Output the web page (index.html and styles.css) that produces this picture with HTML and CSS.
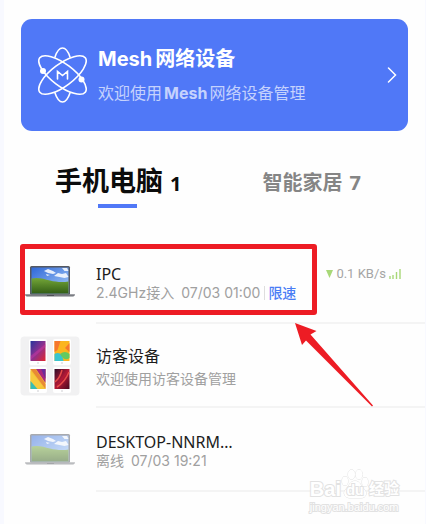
FILE: index.html
```html
<!DOCTYPE html>
<html lang="zh-CN">
<head>
<meta charset="utf-8">
<meta name="viewport" content="width=device-width, initial-scale=1">
<title>手机电脑</title>
<link rel="stylesheet" href="styles.css">
</head>
<body>
<svg class="defs" aria-hidden="true">
  <defs>
    <linearGradient id="sky" x1="0" y1="0" x2="1" y2="1"><stop offset="0" stop-color="#2f68d8"/><stop offset="1" stop-color="#a9cdf8"/></linearGradient>
    <linearGradient id="grass" x1="0" y1="0" x2="0" y2="1"><stop offset="0" stop-color="#74a638"/><stop offset="1" stop-color="#335e16"/></linearGradient>
    <linearGradient id="t1" x1="0" y1="0" x2="1" y2="1"><stop offset="0" stop-color="#27349c"/><stop offset=".5" stop-color="#8b3190"/><stop offset="1" stop-color="#e3262c"/></linearGradient>
    <linearGradient id="t4" x1="0" y1="0" x2="1" y2="1"><stop offset="0" stop-color="#2b0d28"/><stop offset=".5" stop-color="#b31836"/><stop offset="1" stop-color="#46081d"/></linearGradient>
    <symbol id="laptop" viewBox="0 0 50 32">
      <rect x="5" y="0" width="40" height="29" rx="1.5" fill="#555961"/>
      <rect x="6.500" y="1.500" width="37" height="26" fill="url(#sky)"/>
      <path d="M19 5l4-2 5 2 3 2-3 1-5-1zM29 10l4-3 4 1 4-1 2.500 4-4 1-5-1zM37 2l5 0 1.500 3-4 0zM21 8l4 1-3 1z" fill="#fff" opacity=".85"/>
      <path d="M6.500 12.500C13 11 19 13 25 14.500S37 16.500 43.500 15.500V27.500H6.500z" fill="url(#grass)"/>
      <path d="M0 28.500H50L48.500 30.500H1.500z" fill="#6d7076"/>
      <path d="M0 28.500H50V29.500H0z" fill="#85888e"/>
      <path d="M22 29h7v1h-7z" fill="#4d5056"/>
    </symbol>
  </defs>
</svg>
<main class="page">
  <a class="mesh" href="#mesh">
    <svg class="atom" viewBox="0 0 50 58" aria-hidden="true">
      <g fill="none" stroke="#fff" stroke-width="1.600" stroke-linecap="round">
        <path d="M18 11C20 5 23 2 25.500 2S31 5 33 11M18 47C20 53 23 56 25.500 56S31 53 33 47"/>
        <ellipse cx="25.500" cy="29" rx="28.500" ry="11" transform="rotate(37 25.500 29)"/>
        <ellipse cx="25.500" cy="29" rx="28.500" ry="11" transform="rotate(-37 25.500 29)"/>
        <path d="M20.500 33V25.500L25.500 29.500 30.500 25.500V33"/>
      </g>
      <circle cx="6" cy="25" r="3" fill="#fff"/><circle cx="44.500" cy="33.500" r="3" fill="#fff"/>
    </svg>
    <div class="mesh-text">
      <h1 class="mesh-title"><span class="latin">Mesh</span>网络设备</h1>
      <p class="mesh-sub">欢迎使用<span class="latin">Mesh</span>网络设备管理</p>
    </div>
    <svg class="chevron" viewBox="0 0 10 16" aria-hidden="true"><path d="M1.500 1L8.500 8 1.500 15" fill="none" stroke="#fff" stroke-width="1.500" stroke-linecap="round"/></svg>
  </a>

  <nav class="tabs">
    <button class="tab tab-active" type="button">手机电脑<span class="count">1</span></button>
    <button class="tab" type="button">智能家居<span class="count">7</span></button>
  </nav>

  <ul class="devices">
    <li class="device device-marked">
      <svg class="thumb" viewBox="-5 -14 60 60" aria-hidden="true"><use href="#laptop" width="50" height="32"/></svg>
      <div class="info">
        <div class="copy">
          <h2 class="name">IPC</h2>
          <p class="meta"><span>2.4GHz接入</span><time>07/03 01:00</time><a class="limit" href="#limit">限速</a></p>
        </div>
        <div class="speed">
          <svg class="down" viewBox="0 0 7 8" aria-hidden="true"><path d="M0 0h7L3.500 8z" fill="#a8d878"/></svg>
          <span>0.1 KB/s</span>
          <svg class="bars" viewBox="0 0 12 10" aria-hidden="true"><path d="M1 7v3M4 6v4M7.500 3v7M11 0v10" stroke="#a8d878" stroke-width="1.400"/></svg>
        </div>
      </div>
      <svg class="arrow" viewBox="0 0 79 84" aria-hidden="true"><path d="M0 0L21.500 8 15.500 11.500 78 82.500 77 83.500 11 17.500 7 22z" fill="#ed1c24"/></svg>
    </li>
    <li class="device device-guest">
      <svg class="thumb" viewBox="0 0 60 60" aria-hidden="true">
        <rect x=".500" y=".500" width="59" height="59" rx="4" fill="#f1f1f2"/>
        <g fill="#fff"><rect x="9" y="3" width="18" height="26" rx="2"/><rect x="33" y="3" width="18" height="26" rx="2"/><rect x="9" y="31" width="18" height="26" rx="2"/><rect x="33" y="31" width="18" height="26" rx="2"/></g>
        <path d="M10.500 5h15v20h-15z" fill="url(#t1)"/>
        <path d="M10.500 20L25.500 8v3L10.500 24z" fill="#d33aa6" opacity=".45"/>
        <path d="M34.500 5h15v20h-15z" fill="#fbb51e"/>
        <path d="M34.500 5h6l-3 9-3 2zM45 12l4.500-5v9z" fill="#f6772d"/>
        <path d="M34.500 18q7-4 9 7h-9z" fill="#39c5ce"/><path d="M40 18q5-4 9.500 0v4q-5 4-9.500-4z" fill="#64ca61"/>
        <path d="M10.500 33h15v20h-15z" fill="#f4c537"/>
        <path d="M10.500 33h5l10 15v5z" fill="#e98a35"/><path d="M16 33h9.500v14z" fill="#a9277e"/><path d="M21 33h4.500v10z" fill="#6b2a9a"/><path d="M10.500 35v18h6l6-3z" fill="#f7cb3f"/><path d="M10.500 45v8h7z" fill="#36bdb7"/>
        <path d="M34.500 33h15v20h-15z" fill="url(#t4)"/>
        <path d="M35 46Q40 42 42 34M37 51Q45 46 49 36" fill="none" stroke="#e84b48" stroke-width="1.500"/>
        <g fill="#c9c9ce"><circle cx="18" cy="27" r=".8"/><circle cx="42" cy="27" r=".8"/><circle cx="18" cy="55" r=".8"/><circle cx="42" cy="55" r=".8"/></g>
      </svg>
      <div class="info">
        <div class="copy">
          <h2 class="name">访客设备</h2>
          <p class="meta">欢迎使用访客设备管理</p>
        </div>
      </div>
    </li>
    <li class="device">
      <svg class="thumb thumb-offline" viewBox="-5 -14 60 60" aria-hidden="true"><use href="#laptop" width="50" height="32"/></svg>
      <div class="info">
        <div class="copy">
          <h2 class="name">DESKTOP-NNRM…</h2>
          <p class="meta"><span>离线</span><time>07/03 19:21</time></p>
        </div>
      </div>
    </li>
  </ul>

  <div class="watermark">
    <div class="brand"><span>Bai</span>
      <svg class="paw" viewBox="0 0 28 30" aria-hidden="true">
        <g fill="#fff" stroke="#e2e2e2"><ellipse cx="10.500" cy="5.500" rx="3.500" ry="4.800"/><ellipse cx="18" cy="5.500" rx="3.500" ry="4.800"/><ellipse cx="4" cy="12" rx="3" ry="4.500"/><ellipse cx="24" cy="13" rx="3" ry="4.500"/><path d="M14 12C9 12 8 17 5 20C1 24 4 29 9 29H20C25 29 27 24 23 20C20 17 19 12 14 12z"/></g>
        <text class="du" x="14" y="26" text-anchor="middle">du</text>
      </svg>
      <span class="cn">经验</span></div>
    <div class="site">jingyan.baidu.com</div>
  </div>
</main>
</body>
</html>
```
FILE: styles.css
```css
*,
*::after {
  box-sizing: border-box;
}

body {
  margin: 0;
  background: #f8f9ff;
  font-family: Inter, "Noto Sans CJK SC", sans-serif;
  color: #1c1c1c;
}

h1, h2, p, ul {
  margin: 0;
  padding: 0;
}

a {
  color: inherit;
  text-decoration: none;
}

.defs {
  position: absolute;
  width: 0;
  height: 0;
}

.page {
  position: relative;
  min-height: 100vh;
  margin: 0 1px 0 4px;
  padding-top: 19px;
  background: #fefefe;
}

.mesh {
  display: flex;
  align-items: center;
  gap: 11px;
  height: 112px;
  margin: 0 17px;
  padding: 0 11px 0 16px;
  border-radius: 11px;
  background: #5078f7;
  color: #fff;
}

.atom {
  flex: none;
  width: 50px;
  height: 58px;
}

.mesh-text {
  flex: 1;
  white-space: nowrap;
}

.mesh-title {
  font-size: 20px;
  line-height: 36px;
  font-weight: 600;
}

.mesh-title .latin {
  margin-right: 3px;
  font-weight: 700;
}

.mesh-sub {
  font-size: 16px;
  line-height: 32px;
  color: #c5d2fd;
}

.mesh-sub .latin {
  margin: 0 2px;
  font-weight: 700;
}

.chevron {
  flex: none;
  width: 10px;
  height: 16px;
}

.tabs {
  display: grid;
  grid-template-columns: 1fr 1fr;
  height: 109px;
  padding: 26px 64px 0 51px;
}

.tab {
  position: relative;
  height: 52px;
  padding: 0;
  border: 0;
  background: none;
  font-family: inherit;
  font-size: 20px;
  line-height: 44px;
  font-weight: 600;
  color: #858585;
  text-align: right;
  white-space: nowrap;
}

.count {
  margin-left: 7px;
  font-family: "Noto Sans", sans-serif;
  font-size: 20px;
  font-weight: 700;
}

.tab-active {
  font-size: 27px;
  color: #0c0c0c;
  text-align: left;
}

.tab-active::after {
  content: "";
  position: absolute;
  left: 43px;
  bottom: 1px;
  width: 39px;
  height: 4px;
  background: #5078f7;
}

.devices {
  list-style: none;
}

.device {
  position: relative;
  display: flex;
  align-items: center;
  gap: 16px;
  height: 84px;
  padding-left: 16px;
}

.thumb {
  flex: none;
  width: 60px;
  height: 60px;
}

.thumb-offline {
  opacity: 0.5;
}

.info {
  display: flex;
  flex: 1;
  align-items: center;
  justify-content: space-between;
  height: 100%;
  padding: 3px 24px 0 0;
  border-bottom: 2px solid #f4f4f4;
  white-space: nowrap;
}

.name {
  font-family: "Noto Sans", "Noto Sans CJK SC", sans-serif;
  font-size: 16px;
  line-height: 20px;
  font-weight: 400;
}

.meta {
  display: flex;
  align-items: center;
  gap: 7px;
  font-size: 14px;
  line-height: 18px;
  color: #a0a0a0;
}

.device-guest .info {
  padding-top: 8px;
}

.device-guest .meta {
  line-height: 26px;
}

.limit {
  margin-left: -3px;
  padding-left: 3px;
  border-left: 1px solid #dedede;
  line-height: 14px;
  font-weight: 500;
  color: #4a7df5;
}

.speed {
  display: flex;
  align-items: center;
  gap: 3px;
  padding-bottom: 18px;
  font-family: Roboto, sans-serif;
  font-size: 13px;
  color: #a5a5a5;
}

.down {
  width: 7px;
  height: 8px;
}

.bars {
  width: 12px;
  height: 10px;
}

.device-marked::after {
  content: "";
  position: absolute;
  top: 4px;
  left: 16px;
  width: 297px;
  height: 71px;
  border: 5px solid #ed1c24;
  border-radius: 3px;
}

.arrow {
  position: absolute;
  z-index: 1;
  top: 83px;
  left: 291px;
  width: 79px;
  height: 84px;
}

.watermark {
  position: absolute;
  right: 26px;
  top: 469px;
  color: #fff;
  font-family: "Liberation Sans", "Noto Sans CJK SC", sans-serif;
  -webkit-text-stroke: 2px #e2e2e2;
  paint-order: stroke fill;
}

.brand {
  display: flex;
  align-items: flex-end;
  height: 30px;
  font-size: 20px;
  line-height: 20px;
  font-weight: 700;
}

.paw {
  width: 28px;
  height: 30px;
}

.du {
  font-size: 14px;
  fill: #fff;
  stroke: #e2e2e2;
  stroke-width: 2px;
}

.cn {
  font-size: 15px;
}

.site {
  font-size: 11px;
  line-height: 16px;
}
```
